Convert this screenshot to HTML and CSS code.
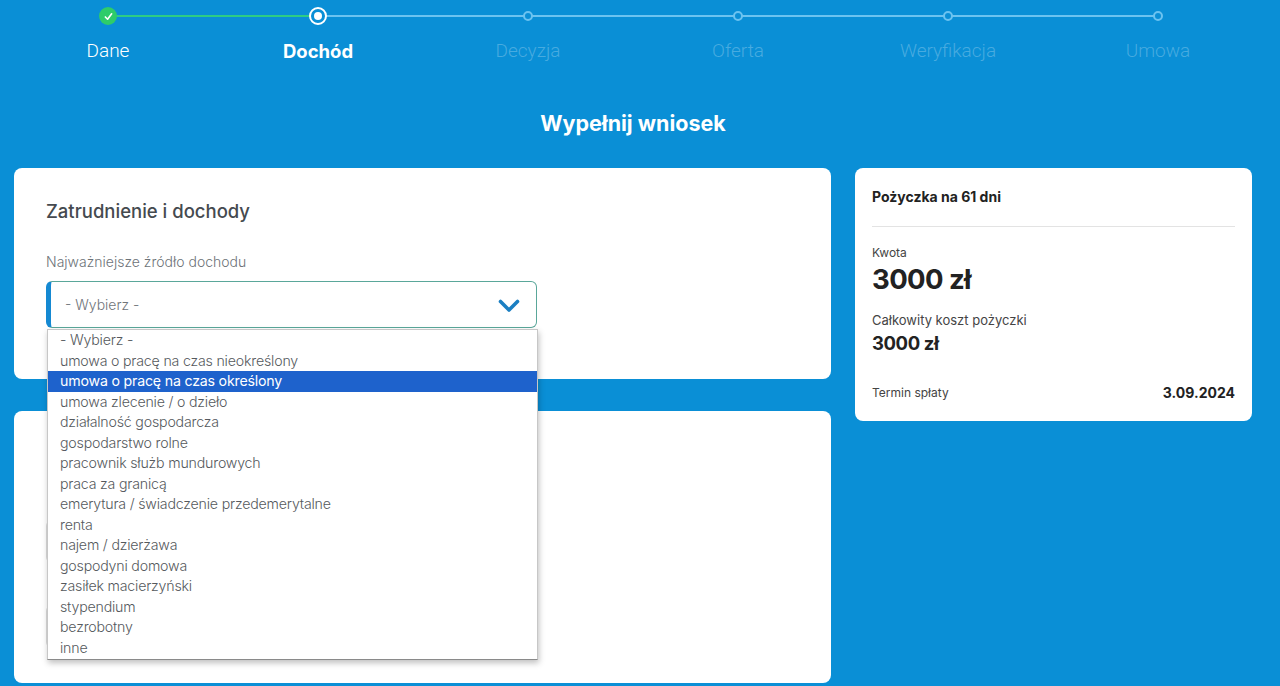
FILE: index.html
```html
<!DOCTYPE html>
<html lang="pl">
<head>
  <meta charset="utf-8">
  <title>Wniosek - Dochód</title>
  <link rel="stylesheet" href="styles.css">
</head>
<body>
  <ol class="steps">
    <li class="step done">
      <span class="marker">
        <svg width="9" height="9" viewBox="0 0 10 10"><polyline points="1.5,5.5 4,8 8.5,2" fill="none" stroke="#fff" stroke-width="1.8" stroke-linecap="round" stroke-linejoin="round"/></svg>
      </span>
      <span class="label">Dane</span>
    </li>
    <li class="step current">
      <span class="marker"></span>
      <span class="label">Dochód</span>
    </li>
    <li class="step"><span class="marker"></span><span class="label">Decyzja</span></li>
    <li class="step"><span class="marker"></span><span class="label">Oferta</span></li>
    <li class="step"><span class="marker"></span><span class="label">Weryfikacja</span></li>
    <li class="step last"><span class="marker"></span><span class="label">Umowa</span></li>
  </ol>

  <h1 class="page-title">Wypełnij wniosek</h1>

  <div class="layout">
    <div class="form-col">
      <section class="card income">
        <h2 class="card-title">Zatrudnienie i dochody</h2>
        <label class="field-label">Najważniejsze źródło dochodu</label>
        <div class="select open">
          <span class="select-value">- Wybierz -</span>
          <svg class="chevron" width="22" height="14" viewBox="0 0 22 14"><polyline points="2.5,2.5 11,11 19.5,2.5" fill="none" stroke="#1b7fc2" stroke-width="3.6" stroke-linecap="round" stroke-linejoin="round"/></svg>

          <ul class="options">
            <li>- Wybierz -</li>
            <li>umowa o pracę na czas nieokreślony</li>
            <li class="selected">umowa o pracę na czas określony</li>
            <li>umowa zlecenie / o dzieło</li>
            <li>działalność gospodarcza</li>
            <li>gospodarstwo rolne</li>
            <li>pracownik służb mundurowych</li>
            <li>praca za granicą</li>
            <li>emerytura / świadczenie przedemerytalne</li>
            <li>renta</li>
            <li>najem / dzierżawa</li>
            <li>gospodyni domowa</li>
            <li>zasiłek macierzyński</li>
            <li>stypendium</li>
            <li>bezrobotny</li>
            <li>inne</li>
          </ul>
        </div>
      </section>

      <section class="card details">
        <div class="input-box first"></div>
        <div class="input-box"></div>
      </section>
    </div>

    <aside class="card summary">
      <div class="summary-head">Pożyczka na 61 dni</div>
      <div class="small-label">Kwota</div>
      <div class="amount">3000 zł</div>
      <div class="cost-label">Całkowity koszt pożyczki</div>
      <div class="cost">3000 zł</div>
      <div class="due">
        <span class="small-label">Termin spłaty</span>
        <span class="due-date">3.09.2024</span>
      </div>
    </aside>
  </div>
</body>
</html>
```

FILE: styles.css
```css
body {
  margin: 0;
  background-color: #0a8fd6;
  font-family: "Inter", "Noto Sans", sans-serif;
  height: 686px;
  overflow: hidden;
}

/* stepper */
.steps {
  list-style: none;
  margin: 0 0 0 3px;
  padding: 0;
  display: grid;
  grid-template-columns: repeat(6, 210px);
}

.step {
  position: relative;
  display: flex;
  flex-direction: column;
  align-items: center;
}

.step::after {
  content: "";
  position: absolute;
  top: 15px;
  left: 50%;
  width: 100%;
  height: 2px;
  background-color: #6cc3f0;
}

.step.done::after {
  background-color: #2ecc84;
}

.step.last::after {
  display: none;
}

.marker {
  position: relative;
  z-index: 1;
  height: 32px;
  display: flex;
  align-items: center;
  justify-content: center;
}

.marker::before {
  content: "";
  width: 6px;
  height: 6px;
  border: 2px solid #6cc3f0;
  border-radius: 50%;
  background-color: #0a8fd6;
}

.done .marker::before,
.current .marker::before {
  display: none;
}

.done .marker {
  width: 18px;
  height: 18px;
  margin: 7px 0;
  border-radius: 50%;
  background-color: #2ecc6a;
}

.current .marker {
  width: 14px;
  height: 14px;
  margin: 7px 0;
  border: 2px solid #fff;
  border-radius: 50%;
  background-color: #0a8fd6;
}

.current .marker::after {
  content: "";
  width: 8px;
  height: 8px;
  border-radius: 50%;
  background-color: #fff;
}

.label {
  margin-top: 8px;
  font-family: "Roboto", sans-serif;
  font-weight: 300;
  font-size: 19px;
  line-height: 22px;
  color: rgba(255, 255, 255, 0.26);
}

.done .label {
  color: #fff;
}

.current .label {
  font-family: "Inter", sans-serif;
  font-size: 18.5px;
  font-weight: 700;
  color: #fff;
}

.page-title {
  margin: 47px 0 31px;
  text-align: center;
  font-size: 21.5px;
  line-height: 28px;
  font-weight: 700;
  color: #fff;
  padding-right: 14px;
}

/* cards */
.layout {
  display: grid;
  grid-template-columns: 817px 397px;
  gap: 24px;
  padding: 0 14px;
  align-items: start;
}

.form-col {
  display: flex;
  flex-direction: column;
  gap: 32px;
}

.card {
  background-color: #fff;
  border-radius: 8px;
}

.income {
  padding: 31px 32px 51px;
}

.card-title {
  margin: 0;
  font-size: 18.5px;
  line-height: 24px;
  font-weight: 500;
  color: #454a4f;
}

.field-label {
  display: block;
  margin-top: 30px;
  margin-bottom: 10px;
  font-size: 14px;
  line-height: 18px;
  font-weight: 300;
  color: #6d7378;
}

.select {
  position: relative;
  width: 491px;
  height: 47px;
  box-sizing: border-box;
  border: 1px solid #5aa79a;
  border-left: 5px solid #1589d2;
  border-radius: 6px;
  display: flex;
  align-items: center;
  justify-content: space-between;
  padding: 0 16px 0 14px;
}

.select-value {
  font-size: 14px;
  font-weight: 300;
  color: #70757a;
}

.chevron {
  margin-top: 2px;
}

/* open list of options */
.options {
  position: absolute;
  top: 47px;
  left: -4px;
  z-index: 5;
  width: 491px;
  margin: 0;
  padding: 0 0 1px;
  list-style: none;
  background-color: #fff;
  border: 1px solid #c7c7c7;
  border-bottom-color: #8a8a8a;
  box-sizing: border-box;
  box-shadow: 1px 3px 6px rgba(0, 0, 0, 0.25);
}

.options li {
  height: 20.5px;
  line-height: 20.5px;
  padding-left: 12px;
  font-size: 14.2px;
  font-weight: 300;
  color: #55595d;
  letter-spacing: -0.2px;
}

.options li.selected {
  background-color: #1e62cc;
  color: #fff;
  font-weight: 400;
}

.details {
  height: 272px;
  padding: 0 32px;
  box-sizing: border-box;
}

.input-box {
  width: 492px;
  height: 43px;
  margin-top: 42px;
  border: 1px solid #dcdcdc;
  border-radius: 6px;
  box-sizing: border-box;
}

.input-box.first {
  margin-top: 109px;
}

/* loan summary */
.summary {
  padding: 19px 17px 19px;
  color: #222;
}

.summary-head {
  font-size: 14px;
  line-height: 20px;
  font-weight: 700;
  padding-bottom: 19px;
  border-bottom: 1px solid #e3e3e3;
  margin-bottom: 18px;
}

.small-label {
  font-size: 12px;
  line-height: 16px;
  color: #444;
}

.amount {
  margin-top: 3px;
  font-size: 27.5px;
  line-height: 30px;
  font-weight: 700;
  letter-spacing: -0.6px;
}

.cost-label {
  margin-top: 17px;
  font-size: 13px;
  line-height: 18px;
  color: #444;
}

.cost {
  margin-top: 3px;
  font-size: 18.5px;
  line-height: 22px;
  font-weight: 700;
  letter-spacing: -0.4px;
}

.due {
  margin-top: 30px;
  display: flex;
  justify-content: space-between;
  align-items: center;
  line-height: 18px;
}

.due-date {
  font-size: 14px;
  font-weight: 700;
}
```
